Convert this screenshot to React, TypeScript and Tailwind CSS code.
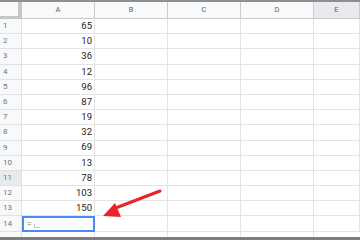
import React from 'react';

const values = [65, 10, 36, 12, 96, 87, 19, 32, 69, 13, 78, 103, 150];
const columns = ['A', 'B', 'C', 'D', 'E'];

const font = { fontFamily: 'Roboto, "Liberation Sans", Arial, sans-serif' };

const RowLabel: React.FC<{ n: number; active?: boolean }> = ({ n, active }) => (
  <div
    className={`w-[22px] shrink-0 h-full flex items-center pl-[3px] text-[8px] text-[#70757a] border-r border-b border-[#e1e1e1] ${
      active ? 'bg-[#e8eaed]' : 'bg-[#f8f9fa]'
    }`}
  >
    {n}
  </div>
);

const Cell: React.FC<{ children?: React.ReactNode; last?: boolean }> = ({ children, last }) => (
  <div
    className={`${last ? 'flex-1' : 'w-[73px] shrink-0'} h-full flex items-center justify-end pr-[2px] text-[9.5px] text-[#222] border-r border-b border-[#e4e4e4]`}
  >
    {children}
  </div>
);

export default function App() {
  return (
    <div className="relative w-[360px] h-[240px] overflow-hidden bg-white flex flex-col" style={font}>
      <div className="h-[2px] shrink-0 bg-[#8f8f8f]" />

      {/* header row */}
      <div className="flex h-[17px] shrink-0">
        <div className="w-[22px] shrink-0 h-full bg-[#f8f9fa] border-r-4 border-b-[3px] border-[#c4c7c5]" />
        {columns.map((c, i) => (
          <div
            key={c}
            className={`${i === 4 ? 'flex-1' : 'w-[73px] shrink-0'} h-full flex items-center justify-center text-[7.5px] text-[#5f6368] border-r border-b border-[#c9cbcd] ${
              i === 4 ? 'bg-[#e8eaed]' : 'bg-[#f8f9fa]'
            }`}
          >
            {c}
          </div>
        ))}
      </div>

      {values.map((v, i) => (
        <div key={i} className="flex h-[15.2px] shrink-0">
          <RowLabel n={i + 1} active={i === 10} />
          <Cell>{v}</Cell>
          <Cell />
          <Cell />
          <Cell />
          <Cell last />
        </div>
      ))}

      {/* row 14 with active cell */}
      <div className="flex h-[15.6px] shrink-0">
        <RowLabel n={14} />
        <div className="w-[73px] shrink-0 h-full border-2 border-[#4a8af4] flex items-center pl-[3px] gap-[3px] text-[8px] text-[#5f6368]">
          <span>=</span>
          <span className="w-[6px] h-[4px] border-b border-l border-[#c8c8c8] mt-[3px]" />
        </div>
        <Cell />
        <Cell />
        <Cell />
        <Cell last />
      </div>

      <div className="flex flex-1 min-h-0 overflow-hidden">
        <div className="w-[22px] shrink-0 bg-[#f8f9fa] border-r border-[#e1e1e1] pl-[3px] text-[8px] text-[#70757a] leading-[15px]">15</div>
        <div className="w-[73px] shrink-0 border-r border-[#e4e4e4]" />
        <div className="w-[73px] shrink-0 border-r border-[#e4e4e4]" />
        <div className="w-[73px] shrink-0 border-r border-[#e4e4e4]" />
        <div className="w-[73px] shrink-0 border-r border-[#e4e4e4]" />
        <div className="flex-1" />
      </div>

      <div className="h-[3px] shrink-0 bg-[#7d7d7d]" />

      {/* red arrow annotation */}
      <svg className="absolute left-0 top-0" width="360" height="240" viewBox="0 0 360 240">
        <line x1="160" y1="191" x2="113" y2="209" stroke="#e8232a" strokeWidth="3" strokeLinecap="round" />
        <polygon points="103,216 115,203 121,217" fill="#e8232a" />
      </svg>
    </div>
  );
}
